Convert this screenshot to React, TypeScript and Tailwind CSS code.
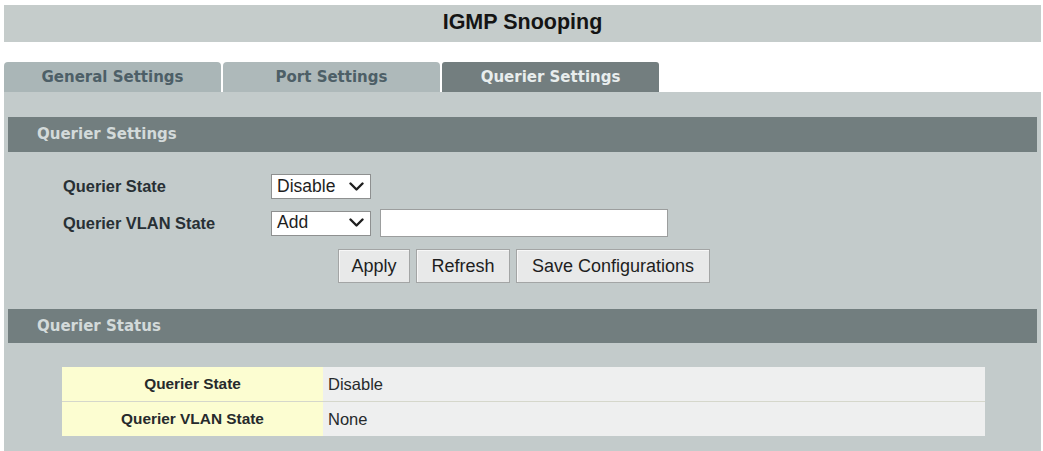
import React from "react";

const Chevron = () => (
  <svg width="15" height="10" viewBox="0 0 15 10" className="shrink-0">
    <polyline points="1.5,1.5 7.5,7.5 13.5,1.5" fill="none" stroke="#1f1f1f" strokeWidth="2.4" strokeLinecap="round" strokeLinejoin="round" />
  </svg>
);

const Select = ({ value }: { value: string }) => (
  <div className="w-[100px] h-[25px] bg-white border border-[#8e9090] flex items-center justify-between pl-[5px] pr-[6px] text-[17.5px] text-[#1e1e1e] leading-none">
    <span>{value}</span>
    <Chevron />
  </div>
);

const Btn = ({ label, w }: { label: string; w: string }) => (
  <div className={`${w} h-[34px] bg-[#e8e9e9] border border-[#a3a5a5] shadow-[inset_1px_1px_0_#f7f7f7] flex items-center justify-center text-[18px] text-[#1e1e1e] leading-none`}>
    {label}
  </div>
);

const SectionBar = ({ title, h }: { title: string; h: string }) => (
  <div className={`${h} bg-[#727e7f] flex items-center pl-[29px] text-[15px] font-bold text-[#d3dada]`} style={{ fontFamily: '"DejaVu Sans", sans-serif' }}>
    {title}
  </div>
);

export default function App() {
  const tabFont = { fontFamily: '"DejaVu Sans", sans-serif' };
  return (
    <div className="w-[1043px] h-[451px] bg-white overflow-hidden" style={{ fontFamily: '"Liberation Sans", Arial, sans-serif' }}>
      <div className="ml-[4px] w-[1037px] pt-[5px]">
        <div className="h-[37px] bg-[#c5cccb] flex items-center justify-center pb-[3px] text-[21.5px] font-bold text-[#141414]">
          IGMP Snooping
        </div>
        <div className="mt-[20px] h-[30px] flex gap-[2px] text-[15px] font-bold" style={tabFont}>
          <div className="w-[217px] rounded-t-[4px] bg-[#aab6b7] text-[#4d5f67] flex items-center justify-center">General Settings</div>
          <div className="w-[217px] rounded-t-[4px] bg-[#aeb9ba] text-[#4d5f67] flex items-center justify-center">Port Settings</div>
          <div className="w-[217px] rounded-t-[3px] bg-[#737e7f] text-[#e8eded] flex items-center justify-center">Querier Settings</div>
        </div>
        <div className="h-[370px] bg-[#c3cbcb] px-[4px] pt-[25px]">
          <SectionBar title="Querier Settings" h="h-[35px]" />
          <div className="pl-[55px] pt-[22px]">
            <div className="flex items-center h-[25px]">
              <div className="w-[208px] text-[16.4px] font-bold text-[#283035]">Querier State</div>
              <Select value="Disable" />
            </div>
            <div className="flex items-center h-[28px] mt-[10px]">
              <div className="w-[208px] text-[16.4px] font-bold text-[#283035]">Querier VLAN State</div>
              <Select value="Add" />
              <div className="ml-[9px] w-[288px] h-[28px] bg-white border border-[#9c9e9e]" />
            </div>
            <div className="mt-[12px] ml-[275px] flex gap-[6px]">
              <Btn label="Apply" w="w-[72px]" />
              <Btn label="Refresh" w="w-[94px]" />
              <Btn label="Save Configurations" w="w-[194px]" />
            </div>
          </div>
          <div className="mt-[26px]">
            <SectionBar title="Querier Status" h="h-[34px]" />
          </div>
          <div className="mt-[24px] ml-[54px] w-[923px] text-[#262a2c]">
            <div className="flex h-[35px] border-b border-[#d5d7cb]">
              <div className="w-[261px] bg-[#fcfdd1] flex items-center justify-center text-[15.4px] font-bold">Querier State</div>
              <div className="flex-1 bg-[#eeefef] flex items-center pl-[5px] text-[16.5px]">Disable</div>
            </div>
            <div className="flex h-[34px]">
              <div className="w-[261px] bg-[#fcfdd1] flex items-center justify-center text-[15.4px] font-bold">Querier VLAN State</div>
              <div className="flex-1 bg-[#eeefef] flex items-center pl-[5px] text-[16.5px]">None</div>
            </div>
          </div>
        </div>
      </div>
    </div>
  );
}
